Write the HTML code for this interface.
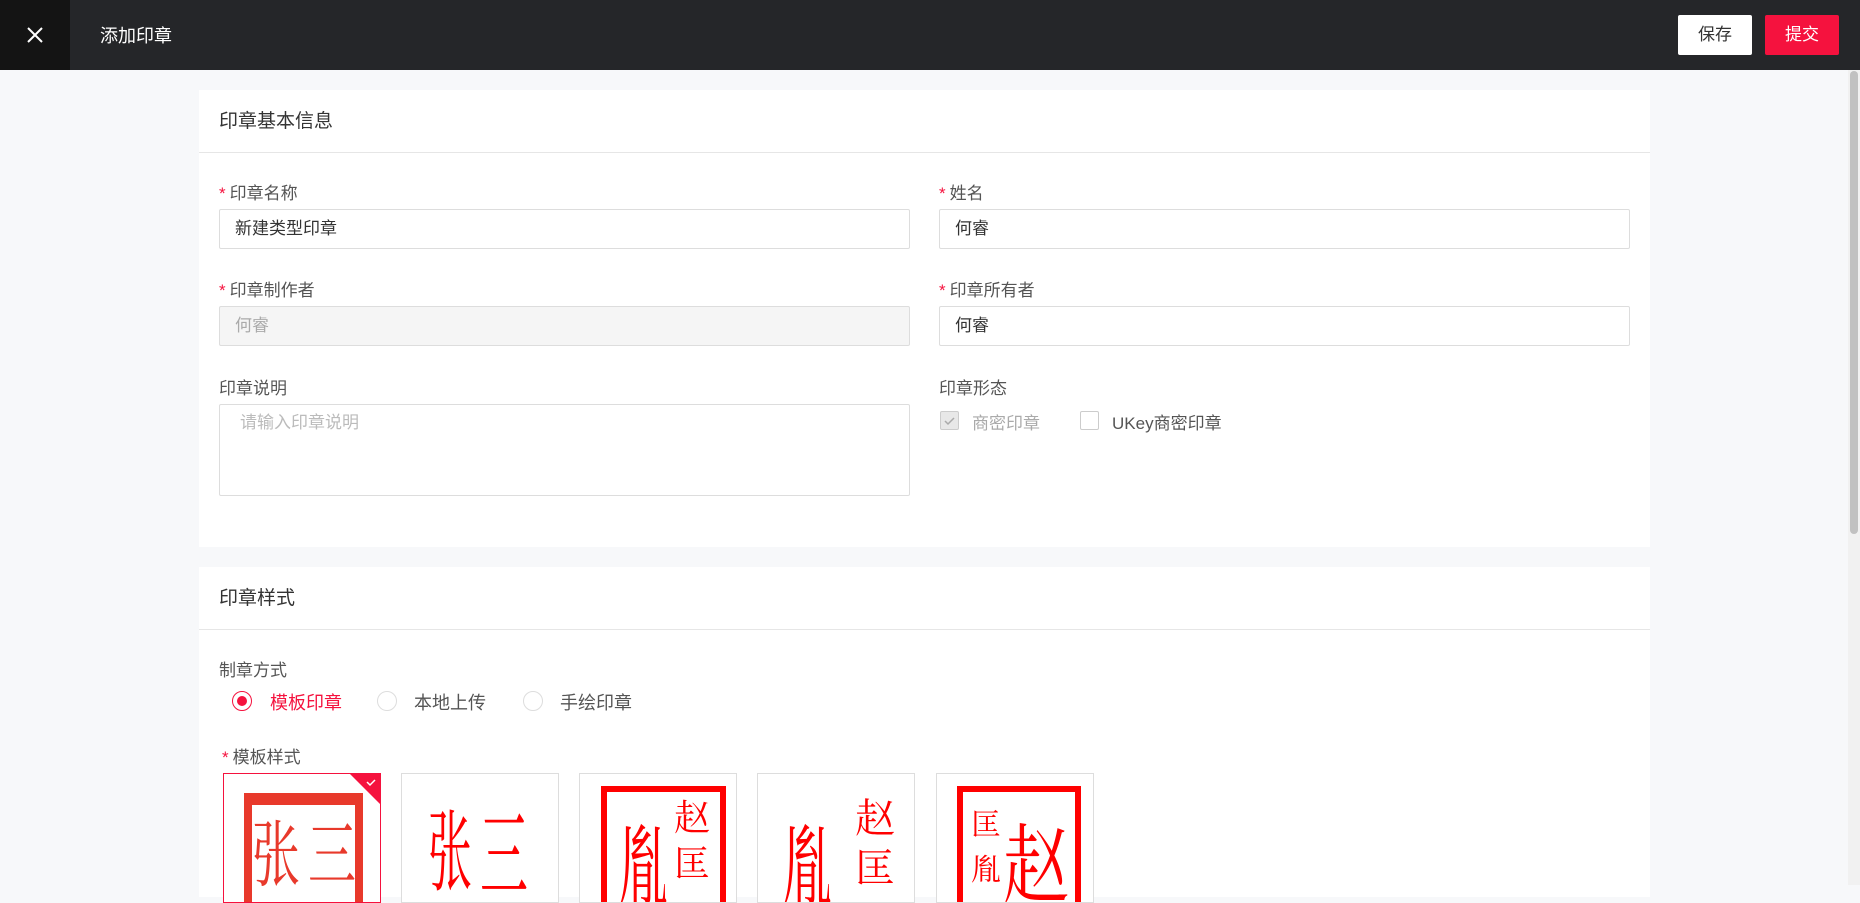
<!DOCTYPE html>
<html><head><meta charset="utf-8">
<style>
*{margin:0;padding:0;box-sizing:border-box}
body{width:1860px;height:885px;overflow:hidden;background:#f7f8fa;font-family:"Liberation Sans","Noto Sans CJK SC",sans-serif;position:relative;color:#333}
.hdr{position:absolute;left:0;top:0;width:1860px;height:70px;background:#252629}
.close{position:absolute;left:0;top:0;width:70px;height:70px;background:#141414}
.ttl{position:absolute;left:100px;top:22px;color:#fff;font-size:18px}
.btn{position:absolute;top:15px;height:40px;width:74px;font-size:17px;line-height:40px;text-align:center;border-radius:2px}
.card{position:absolute;left:199px;width:1451px;background:#fff}
.ch{height:63px;border-bottom:1px solid #e6e6e6;font-size:19px;line-height:63px;padding-left:20px;color:#333}
.lb{position:absolute;font-size:17px;color:#555}
.lb i{color:#f5123e;font-style:normal;margin-right:4px}
.in{position:absolute;height:40px;border:1px solid #ddd;border-radius:2px;font-size:17px;line-height:38px;padding-left:15px;color:#333}
.sb{position:absolute;right:0;top:70px;width:12px;height:815px;background:#f1f1f1}
.sb div{position:absolute;left:2px;top:1px;width:8px;height:463px;background:#c1c1c1;border-radius:4px}
.rad{position:absolute;width:20px;height:20px;border:1px solid #ddd;border-radius:50%;top:691px}
.rt{position:absolute;top:689px;font-size:18px;color:#555}
.tp{position:absolute;top:773px;width:158px;height:130px;border:1px solid #ddd;overflow:hidden;background:#fff}
.s{position:absolute;font-family:"Noto Serif CJK SC","Noto Sans CJK SC",serif;color:#ff0000;line-height:1;transform-origin:0 0}
</style></head><body>
<div class="hdr">
<div class="close"><svg width="70" height="70"><path d="M28 28L42 42M42 28L28 42" stroke="#fff" stroke-width="2"/></svg></div>
<div class="ttl">添加印章</div>
<div class="btn" style="left:1678px;background:#fff;color:#333">保存</div>
<div class="btn" style="left:1765px;background:#f5123e;color:#fff">提交</div>
</div>
<div class="sb"><div></div></div>

<div class="card" style="top:90px;height:457px"><div class="ch">印章基本信息</div></div>
<div class="lb" style="left:219px;top:179px"><i>*</i>印章名称</div>
<div class="in" style="left:219px;top:209px;width:691px">新建类型印章</div>
<div class="lb" style="left:939px;top:179px"><i>*</i>姓名</div>
<div class="in" style="left:939px;top:209px;width:691px">何睿</div>
<div class="lb" style="left:219px;top:276px"><i>*</i>印章制作者</div>
<div class="in" style="left:219px;top:306px;width:691px;background:#f5f5f5;color:#aaa">何睿</div>
<div class="lb" style="left:939px;top:276px"><i>*</i>印章所有者</div>
<div class="in" style="left:939px;top:306px;width:691px">何睿</div>
<div class="lb" style="left:219px;top:374px">印章说明</div>
<div class="in" style="left:219px;top:404px;width:691px;height:92px;color:#bbb;padding-left:20px;line-height:36px">请输入印章说明</div>
<div class="lb" style="left:939px;top:374px">印章形态</div>
<div style="position:absolute;left:940px;top:411px;width:19px;height:19px;border:1px solid #ccc;background:#e8e8e8;border-radius:2px"><svg width="17" height="17"><path d="M4 9l3 3 6-6" stroke="#aaa" stroke-width="1.5" fill="none"/></svg></div>
<div class="lb" style="left:972px;top:409px;color:#aaa">商密印章</div>
<div style="position:absolute;left:1080px;top:411px;width:19px;height:19px;border:1px solid #ccc;border-radius:2px;background:#fff"></div>
<div class="lb" style="left:1112px;top:409px;color:#555">UKey商密印章</div>

<div class="card" style="top:567px;height:330px"><div class="ch">印章样式</div></div>
<div class="lb" style="left:219px;top:656px">制章方式</div>
<div class="rad" style="left:232px;border-color:#f5123e"><div style="position:absolute;left:4px;top:4px;width:10px;height:10px;border-radius:50%;background:#f5123e"></div></div>
<div class="rt" style="left:270px;color:#f5123e">模板印章</div>
<div class="rad" style="left:377px"></div><div class="rt" style="left:414px">本地上传</div>
<div class="rad" style="left:523px"></div><div class="rt" style="left:560px">手绘印章</div>
<div class="lb" style="left:222px;top:743px"><i>*</i>模板样式</div>

<div class="tp" style="left:223px;border-color:#f5123e">
<div style="position:absolute;left:20px;top:19px;width:119px;height:130px;border:8px solid #e8392b;border-top-width:12px"></div>
<div class="s" style="left:28px;top:40px;font-size:48px;color:#e8392b;transform:scaleY(1.5)">张</div>
<div class="s" style="left:84px;top:40px;font-size:48px;color:#e8392b;transform:scaleY(1.5)">三</div>
<svg style="position:absolute;right:0;top:0" width="30" height="30"><path d="M0 0H30V30Z" fill="#f5123e"/><path d="M17 8l3 3 5-5" stroke="#fff" stroke-width="1.5" fill="none"/></svg>
</div>
<div class="tp" style="left:401px">
<div class="s" style="left:26px;top:27px;font-size:44px;transform:scaleY(2)">张</div>
<div class="s" style="left:78px;top:27px;font-size:48px;transform:scaleY(2)">三</div>
</div>
<div class="tp" style="left:579px">
<div style="position:absolute;left:21px;top:12px;width:125px;height:140px;border:6px solid #ff0000"></div>
<div class="s" style="left:38px;top:42px;font-size:50px;transform:scaleY(1.8)">胤</div>
<div class="s" style="left:94px;top:24px;font-size:36px">赵</div>
<div class="s" style="left:94px;top:70px;font-size:36px">匡</div>
</div>
<div class="tp" style="left:757px">
<div class="s" style="left:24px;top:42px;font-size:50px;transform:scaleY(1.8)">胤</div>
<div class="s" style="left:97px;top:22px;font-size:40px">赵</div>
<div class="s" style="left:97px;top:72px;font-size:40px">匡</div>
</div>
<div class="tp" style="left:936px">
<div style="position:absolute;left:20px;top:12px;width:124px;height:140px;border:6px solid #ff0000"></div>
<div class="s" style="left:34px;top:33px;font-size:30px">匡</div>
<div class="s" style="left:34px;top:78px;font-size:30px">胤</div>
<div class="s" style="left:66px;top:42px;font-size:66px;transform:scaleY(1.3)">赵</div>
</div>
</body></html>
